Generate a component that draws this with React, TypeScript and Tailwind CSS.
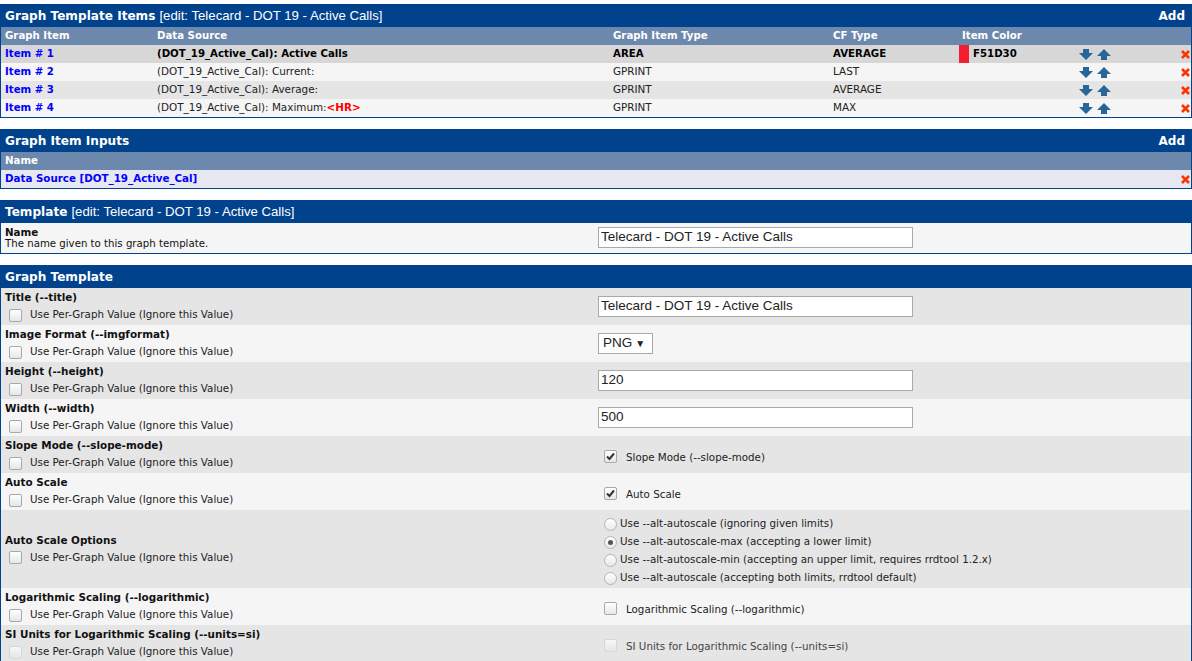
import React from "react";

const F = "font-['DejaVu_Sans',Verdana,sans-serif]";
const A = "font-['Liberation_Sans',Arial,sans-serif]";

function Down() {
  return (
    <svg width="14" height="11" viewBox="0 0 14 11">
      <polygon points="4,0 10,0 10,4 14,4 7,11 0,4 4,4" fill="#286699" />
    </svg>
  );
}

function Up() {
  return (
    <svg width="14" height="11" viewBox="0 0 14 11">
      <polygon points="7,0 14,7 10,7 10,11 4,11 4,7 0,7" fill="#286699" />
    </svg>
  );
}

function Del() {
  return (
    <svg width="9" height="9" viewBox="0 0 9 9">
      <path d="M1 1 L8 8 M8 1 L1 8" stroke="#ff3300" strokeWidth="2.6" />
    </svg>
  );
}

function Check({ on = false, dim = false }: { on?: boolean; dim?: boolean }) {
  return (
    <span
      className={`inline-flex h-[13px] w-[13px] shrink-0 items-center justify-center rounded-[2px] border bg-gradient-to-b from-white to-[#e6e6e6] ${
        dim ? "border-[#d2d2d2] opacity-70" : "border-[#a9a9a9]"
      }`}
    >
      {on && (
        <svg width="9" height="9" viewBox="0 0 9 9">
          <path d="M1 4.5 L3.5 7 L8 1.5" stroke="#333" strokeWidth="2" fill="none" />
        </svg>
      )}
    </span>
  );
}

function Radio({ on = false }: { on?: boolean }) {
  return (
    <span className="inline-flex h-[13px] w-[13px] shrink-0 items-center justify-center rounded-full border border-[#b4b4b4] bg-gradient-to-b from-white to-[#e8e8e8]">
      {on && <span className="h-[5px] w-[5px] rounded-full bg-[#555]" />}
    </span>
  );
}

function Bar({ title, edit, add }: { title: string; edit?: string; add?: boolean }) {
  return (
    <div className="flex h-[22px] items-center justify-between bg-[#00438c] px-1 text-white">
      <div className="flex items-baseline">
        <span className={`${F} text-[12.1px] font-bold`}>{title}</span>
        {edit && <span className={`${A} ml-[4px] text-[13.2px]`}>[edit: {edit}]</span>}
      </div>
      {add && <span className={`${F} pr-[2px] text-[12px] font-bold`}>Add</span>}
    </div>
  );
}

const items = [
  { n: 1, ds: "Active Calls", type: "AREA", cf: "AVERAGE", color: true, bg: "bg-[#d7d7d7]", bold: true },
  { n: 2, ds: "Current:", type: "GPRINT", cf: "LAST", bg: "bg-[#f5f5f5]" },
  { n: 3, ds: "Average:", type: "GPRINT", cf: "AVERAGE", bg: "bg-[#e5e5e5]" },
  { n: 4, ds: "Maximum:", type: "GPRINT", cf: "MAX", bg: "bg-[#f5f5f5]", hr: true },
];

const cols = "grid grid-cols-[152px_456px_220px_129px_120px_100px_1fr]";

function ItemsTable() {
  return (
    <div className="border border-[#00438c]">
      <Bar title="Graph Template Items" edit="Telecard - DOT 19 - Active Calls" add />
      <div className={`${cols} ${F} h-[18px] items-center bg-[#6d88ad] text-[10.2px] font-bold text-white`}>
        <span className="pl-1">Graph Item</span>
        <span className="pl-1">Data Source</span>
        <span className="pl-1">Graph Item Type</span>
        <span className="pl-1">CF Type</span>
        <span className="pl-[4px]">Item Color</span>
        <span />
        <span />
      </div>
      {items.map((r) => (
        <div key={r.n} className={`${cols} ${F} h-[18px] items-center text-[10.4px] text-[#222] ${r.bg}`}>
          <span className="pl-1 text-[10.2px] font-bold text-[#0000ff]">Item # {r.n}</span>
          <span className={`pl-1 ${r.bold ? "text-[10.2px] font-bold text-black" : ""}`}>
            (DOT_19_Active_Cal): {r.ds}
            {r.hr && <span className="font-bold text-[#ff0000]">&lt;HR&gt;</span>}
          </span>
          <span className={`pl-1 ${r.bold ? "text-[10.2px] font-bold text-black" : ""}`}>{r.type}</span>
          <span className={`pl-1 ${r.bold ? "text-[10.2px] font-bold text-black" : ""}`}>{r.cf}</span>
          <span className="flex h-full items-center pl-[1px]">
            {r.color && (
              <>
                <span className="h-full w-[10px] bg-[#f51d30]" />
                <span className="pl-1 text-[10.2px] font-bold text-black">F51D30</span>
              </>
            )}
          </span>
          <span className="flex items-center gap-[4px] pl-[1px]">
            <Down />
            <Up />
          </span>
          <span className="flex justify-end pr-[1px]">
            <Del />
          </span>
        </div>
      ))}
    </div>
  );
}

function InputsTable() {
  return (
    <div className="border border-[#00438c]">
      <Bar title="Graph Item Inputs" add />
      <div className={`${F} flex h-[18px] items-center bg-[#6d88ad] pl-1 text-[10.2px] font-bold text-white`}>Name</div>
      <div className={`${F} flex h-[18px] items-center justify-between bg-[#e6e7f0] pl-1 pr-[1px] text-[10.3px] font-bold text-[#0000ff]`}>
        <span>Data Source [DOT_19_Active_Cal]</span>
        <Del />
      </div>
    </div>
  );
}

function TextBox({ value }: { value: string }) {
  return (
    <div className={`${A} flex h-[21px] w-[315px] items-center border border-[#a9a9a9] bg-white px-[2px] text-[13.5px] text-[#222]`}>
      {value}
    </div>
  );
}

function TemplateTable() {
  return (
    <div className="border border-[#00438c]">
      <Bar title="Template" edit="Telecard - DOT 19 - Active Calls" />
      <div className="grid h-[30px] grid-cols-[597px_1fr] items-center bg-[#f5f5f5]">
        <div className={`${F} pl-1 leading-[11px] text-[#111]`}>
          <div className="text-[10.3px] font-bold">Name</div>
          <div className="text-[10.2px]">The name given to this graph template.</div>
        </div>
        <div className="-mt-[2px]">
          <TextBox value="Telecard - DOT 19 - Active Calls" />
        </div>
      </div>
    </div>
  );
}

type Row = { label: string; right: React.ReactNode; tall?: boolean; dim?: boolean };

function RightCheck({ label, on, dim }: { label: string; on?: boolean; dim?: boolean }) {
  return (
    <div className={`${F} mt-[4px] flex items-center gap-[9px] pl-[6px] text-[10.3px] ${dim ? "text-[#444]" : "text-[#222]"}`}>
      <Check on={on} dim={dim} />
      <span className="mt-[2px]">{label}</span>
    </div>
  );
}

const radios = [
  { t: "Use --alt-autoscale (ignoring given limits)" },
  { t: "Use --alt-autoscale-max (accepting a lower limit)", on: true },
  { t: "Use --alt-autoscale-min (accepting an upper limit, requires rrdtool 1.2.x)" },
  { t: "Use --alt-autoscale (accepting both limits, rrdtool default)" },
];

const rows: Row[] = [
  { label: "Title (--title)", right: <TextBox value="Telecard - DOT 19 - Active Calls" /> },
  {
    label: "Image Format (--imgformat)",
    right: (
      <div className={`${A} flex h-[21px] w-[55px] items-center gap-[3px] border border-[#a9a9a9] bg-white pl-[4px] text-[13.5px] text-[#222]`}>
        PNG <span className="text-[10px]">▼</span>
      </div>
    ),
  },
  { label: "Height (--height)", right: <TextBox value="120" /> },
  { label: "Width (--width)", right: <TextBox value="500" /> },
  { label: "Slope Mode (--slope-mode)", right: <RightCheck label="Slope Mode (--slope-mode)" on /> },
  { label: "Auto Scale", right: <RightCheck label="Auto Scale" on /> },
  {
    label: "Auto Scale Options",
    tall: true,
    right: (
      <div className={`${F} mt-[4px] flex flex-col pl-[6px] text-[10.3px] text-[#222]`}>
        {radios.map((r) => (
          <div key={r.t} className="flex h-[18px] items-center gap-[3px]">
            <Radio on={r.on} />
            <span>{r.t}</span>
          </div>
        ))}
      </div>
    ),
  },
  { label: "Logarithmic Scaling (--logarithmic)", right: <RightCheck label="Logarithmic Scaling (--logarithmic)" /> },
  {
    label: "SI Units for Logarithmic Scaling (--units=si)",
    dim: true,
    right: <RightCheck label="SI Units for Logarithmic Scaling (--units=si)" dim />,
  },
];

function GraphTemplateTable() {
  return (
    <div className="border-x border-t border-[#00438c]">
      <Bar title="Graph Template" />
      {rows.map((r, i) => (
        <div
          key={r.label}
          className={`grid grid-cols-[597px_1fr] items-center ${r.tall ? "h-[78px]" : "h-[37px]"} ${
            i % 2 === 0 ? "bg-[#e5e5e5]" : "bg-[#f5f5f5]"
          }`}
        >
          <div className={`${F} pl-1 text-[#111]`}>
            <div className="text-[10.4px] font-bold leading-[14px]">{r.label}</div>
            <div className="mt-[3px] flex items-center gap-[8px] pl-[4px] text-[10.3px] text-[#222]">
              <Check dim={r.dim} />
              <span>Use Per-Graph Value (Ignore this Value)</span>
            </div>
          </div>
          <div>{r.right}</div>
        </div>
      ))}
    </div>
  );
}

export default function App() {
  return (
    <div className="h-[661px] w-[1192px] overflow-hidden bg-white pt-[4px]">
      <div className="flex flex-col gap-[11px]">
        <ItemsTable />
        <InputsTable />
        <TemplateTable />
        <GraphTemplateTable />
      </div>
    </div>
  );
}
